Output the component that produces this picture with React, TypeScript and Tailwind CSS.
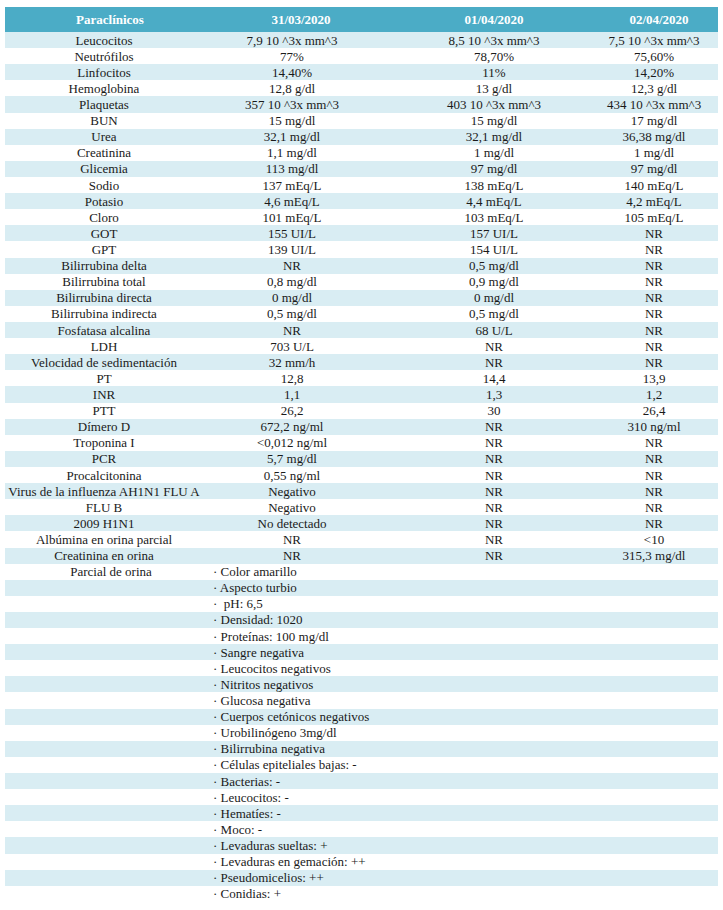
const rows: string[][] = [
  ["Leucocitos", "7,9 10 ^3x mm^3", "8,5 10 ^3x mm^3", "7,5 10 ^3x mm^3"],
  ["Neutrófilos", "77%", "78,70%", "75,60%"],
  ["Linfocitos", "14,40%", "11%", "14,20%"],
  ["Hemoglobina", "12,8 g/dl", "13 g/dl", "12,3 g/dl"],
  ["Plaquetas", "357 10 ^3x mm^3", "403 10 ^3x mm^3", "434 10 ^3x mm^3"],
  ["BUN", "15 mg/dl", "15 mg/dl", "17 mg/dl"],
  ["Urea", "32,1 mg/dl", "32,1 mg/dl", "36,38 mg/dl"],
  ["Creatinina", "1,1 mg/dl", "1 mg/dl", "1 mg/dl"],
  ["Glicemia", "113 mg/dl", "97 mg/dl", "97 mg/dl"],
  ["Sodio", "137 mEq/L", "138 mEq/L", "140 mEq/L"],
  ["Potasio", "4,6 mEq/L", "4,4 mEq/L", "4,2 mEq/L"],
  ["Cloro", "101 mEq/L", "103 mEq/L", "105 mEq/L"],
  ["GOT", "155 UI/L", "157 UI/L", "NR"],
  ["GPT", "139 UI/L", "154 UI/L", "NR"],
  ["Bilirrubina delta", "NR", "0,5 mg/dl", "NR"],
  ["Bilirrubina total", "0,8 mg/dl", "0,9 mg/dl", "NR"],
  ["Bilirrubina directa", "0 mg/dl", "0 mg/dl", "NR"],
  ["Bilirrubina indirecta", "0,5 mg/dl", "0,5 mg/dl", "NR"],
  ["Fosfatasa alcalina", "NR", "68 U/L", "NR"],
  ["LDH", "703 U/L", "NR", "NR"],
  ["Velocidad de sedimentación", "32 mm/h", "NR", "NR"],
  ["PT", "12,8", "14,4", "13,9"],
  ["INR", "1,1", "1,3", "1,2"],
  ["PTT", "26,2", "30", "26,4"],
  ["Dímero D", "672,2 ng/ml", "NR", "310 ng/ml"],
  ["Troponina I", "<0,012 ng/ml", "NR", "NR"],
  ["PCR", "5,7 mg/dl", "NR", "NR"],
  ["Procalcitonina", "0,55 ng/ml", "NR", "NR"],
  ["Virus de la influenza AH1N1 FLU A", "Negativo", "NR", "NR"],
  ["FLU B", "Negativo", "NR", "NR"],
  ["2009 H1N1", "No detectado", "NR", "NR"],
  ["Albúmina en orina parcial", "NR", "NR", "<10"],
  ["Creatinina en orina", "NR", "NR", "315,3 mg/dl"],
];

const orina = [
  "· Color amarillo",
  "· Aspecto turbio",
  "·  pH: 6,5",
  "· Densidad: 1020",
  "· Proteínas: 100 mg/dl",
  "· Sangre negativa",
  "· Leucocitos negativos",
  "· Nitritos negativos",
  "· Glucosa negativa",
  "· Cuerpos cetónicos negativos",
  "· Urobilinógeno 3mg/dl",
  "· Bilirrubina negativa",
  "· Células epiteliales bajas: -",
  "· Bacterias: -",
  "· Leucocitos: -",
  "· Hematíes: -",
  "· Moco: -",
  "· Levaduras sueltas: +",
  "· Levaduras en gemación: ++",
  "· Pseudomicelios: ++",
  "· Conidias: +",
];

const grid = "grid grid-cols-[198px_178px_226px_111px]";

export default function App() {
  return (
    <div className="w-[723px] h-[910px] bg-white pt-[7px] pl-[5px] font-['Liberation_Serif',serif] text-[#1a1a1a]">
      <div className="w-[713px]">
        {/* header */}
        <div className={`${grid} h-[25px] items-center bg-[#4bacc6] text-white font-bold text-[13px]`}>
          <div className="text-center pl-[12px]">Paraclínicos</div>
          <div className="text-center pl-[18px]">31/03/2020</div>
          <div className="text-center">01/04/2020</div>
          <div className="text-center pr-[7px]">02/04/2020</div>
        </div>

        {rows.map((r, i) => (
          <div
            key={r[0]}
            className={`${grid} h-[16.12px] items-center text-[13px] leading-none whitespace-nowrap ${i % 2 === 0 ? "bg-[#d9edf3]" : "bg-white"}`}
          >
            <div className="text-center">{r[0]}</div>
            <div className="text-center">{r[1]}</div>
            <div className="text-center">{r[2]}</div>
            <div className="text-center pr-[17px]">{r[3]}</div>
          </div>
        ))}

        {orina.map((t, i) => (
          <div
            key={i}
            className={`${grid} h-[16.12px] items-center text-[13px] leading-none whitespace-pre ${(rows.length + i) % 2 === 0 ? "bg-[#d9edf3]" : "bg-white"}`}
          >
            <div className="text-center pl-[14px]">{i === 0 ? "Parcial de orina" : ""}</div>
            <div className="pl-[10px]">{t}</div>
            <div />
            <div />
          </div>
        ))}
      </div>
    </div>
  );
}
